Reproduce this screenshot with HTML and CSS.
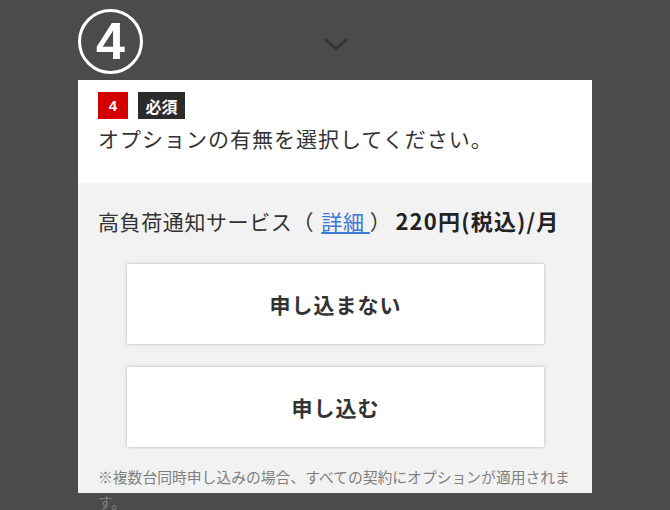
FILE: index.html
```html
<!DOCTYPE html>
<html lang="ja">
<head>
<meta charset="utf-8">
<link rel="stylesheet" href="styles.css">
</head>
<body>
<div class="page">
  <div class="top">
    <div class="step-num">4</div>
    <svg class="chevron" width="26" height="16" viewBox="0 0 26 16"><path d="M2 3 L13 13 L24 3" fill="none" stroke="#363636" stroke-width="3"/></svg>
  </div>
  <div class="card">
    <div class="card-head">
      <div class="badges">
        <span class="badge badge-num">4</span>
        <span class="badge badge-req">必須</span>
      </div>
      <p class="title">オプションの有無を選択してください。</p>
    </div>
    <div class="card-body">
      <p class="service">高負荷通知サービス（ <a class="link" href="#">詳細 </a>）<b class="price">220円(税込)/月</b></p>
      <div class="options">
        <button class="opt">申し込まない</button>
        <button class="opt">申し込む</button>
      </div>
      <p class="note">※複数台同時申し込みの場合、すべての契約にオプションが適用されます。</p>
    </div>
  </div>
</div>
</body>
</html>
```

FILE: styles.css
```css
* { box-sizing: border-box; }
html, body { margin: 0; padding: 0; }
body {
  background: #4b4b4b;
  font-family: "Noto Sans CJK JP", "Noto Sans", sans-serif;
  color: #333;
  width: 670px;
  height: 510px;
  overflow: hidden;
}
.page { width: 670px; }
.top {
  height: 80px;
  display: flex;
  align-items: flex-start;
}
.step-num {
  margin: 9px 0 0 78px;
  width: 65px;
  height: 65px;
  border: 3px solid #fff;
  border-radius: 50%;
  color: #fff;
  font-family: "Liberation Sans", Arial, sans-serif;
  font-weight: bold;
  font-size: 52px;
  line-height: 59px;
  text-align: center;
}
.chevron {
  margin: 36px 0 0 180px;
}
.card {
  margin-left: 78px;
  width: 514px;
  height: 413px;
  background: #f2f2f2;
}
.card-head {
  background: #fff;
  height: 103px;
  padding: 12px 20px 0;
}
.badges { display: flex; gap: 10px; height: 27px; }
.badge {
  display: inline-flex;
  align-items: center;
  justify-content: center;
  height: 27px;
  color: #fff;
  font-weight: bold;
}
.badge-num {
  width: 30px;
  background: #d40000;
  font-family: "Liberation Sans", Arial, sans-serif;
  font-size: 15px;
}
.badge-req {
  width: 47px;
  background: #2b2b2b;
  font-size: 16px;
}
.title {
  margin: 4px 0 0;
  font-size: 21px;
  line-height: 30px;
  letter-spacing: 1px;
  color: #333;
}
.card-body { padding: 22px 20px 0; }
.service {
  margin: 0;
  font-size: 21px;
  line-height: 30px;
  letter-spacing: 0.6px;
  color: #333;
  white-space: nowrap;
}
.link { color: #3b78d6; text-decoration: underline; margin-left: 2px; }
.price { font-weight: bold; color: #222; font-size: 22px; letter-spacing: 1.2px; margin-left: 4px; }
.options {
  display: flex;
  flex-direction: column;
  gap: 23px;
  margin: 28px 28px 0 29px;
}
.opt {
  height: 80px;
  background: #fff;
  border: 0;
  box-shadow: 0 0 3px rgba(0,0,0,0.28);
  font-family: "Noto Sans CJK JP", "Noto Sans", sans-serif;
  font-weight: bold;
  font-size: 21px;
  letter-spacing: 1px;
  color: #333;
  padding: 0;
}
.note {
  margin: 17px 0 0;
  font-size: 14.8px;
  line-height: 25px;
  color: #808080;
}
```
